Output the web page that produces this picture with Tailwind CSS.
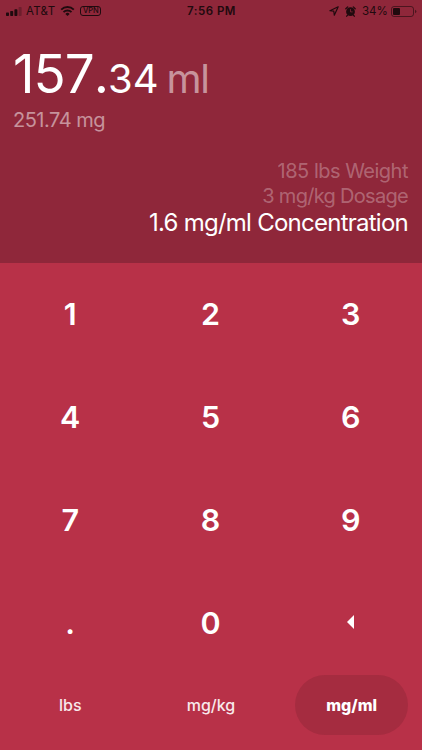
<!DOCTYPE html>
<html lang="en">

<head>
    <meta charset="UTF-8">
    <meta name="viewport" content="width=device-width, initial-scale=1.0">
    <title>Dosage Calculator</title>
    <script src="https://cdn.jsdelivr.net/npm/@tailwindcss/browser@4"></script>
</head>

<body class="h-[750px] flex flex-col overflow-hidden bg-[#b83148] text-white font-['Inter',sans-serif]">
    <!-- results start -->
    <header class="h-[262.5px] shrink-0 bg-[#8f273a]">
        <!-- status bar -->
        <div class="h-[22px] grid grid-cols-3 items-center pl-1.5 pr-[5px] text-[#200a0e] text-[11.5px]">
            <div class="flex items-center">
                <svg class="w-4 h-[9px]" viewBox="0 0 16 9" fill="currentColor">
                    <rect x="0" y="5.5" width="3" height="3.5" rx=".7" />
                    <rect x="4.2" y="4" width="3" height="5" rx=".7" />
                    <rect x="8.4" y="2.2" width="3" height="6.8" rx=".7" />
                    <rect x="12.6" y="0" width="3" height="9" rx=".7" opacity=".3" />
                </svg>
                <span class="ml-1 mt-px tracking-[.3px]">AT&amp;T</span>
                <svg class="ml-[5px] w-[15px] h-[10px]" viewBox="0 0 14 10" fill="none" stroke="currentColor" stroke-width="1.9">
                    <path d="M.7 3.6a9 9 0 0 1 12.6 0" />
                    <path d="M3 6.1a5.7 5.7 0 0 1 8 0" />
                    <path d="M7 10 4.9 7.9a3 3 0 0 1 4.2 0z" fill="currentColor" stroke="none" />
                </svg>
                <span class="ml-[5px] w-[21px] h-[10px] rounded-[3px] border border-current text-center text-[7.5px] leading-[8.5px] font-medium">VPN</span>
            </div>
            <div class="mt-px text-center font-semibold tracking-[.5px]">7:56 PM</div>
            <div class="flex items-center justify-end">
                <svg class="w-[10px] h-[10px]" viewBox="0 0 10 10" fill="none" stroke="currentColor" stroke-width="1.2" stroke-linejoin="round">
                    <path d="M9.2.8.9 4.7l3.9.5.5 4z" />
                </svg>
                <svg class="ml-[6px] w-[11px] h-[11px]" viewBox="0 0 11 11" fill="none" stroke="currentColor" stroke-linecap="round">
                    <circle cx="5.5" cy="5.7" r="4.4" fill="currentColor" stroke="none" />
                    <path d="M.8 2.7 2.7.9M10.2 2.7 8.3.9M2.4 9.3l-.7.9M8.6 9.3l.7.9" stroke-width="1.3" />
                    <path d="M5.5 3.4v2.5h1.8" stroke="#8f273a" stroke-width=".7" />
                </svg>
                <span class="ml-1.5 mt-px tracking-[.1px]">34%</span>
                <svg class="ml-[3px] w-[26px] h-[11px]" viewBox="0 0 26 11">
                    <rect x=".5" y=".5" width="22" height="10" rx="2.5" fill="none" stroke="currentColor" opacity=".6" />
                    <rect x="2" y="2" width="7" height="7" rx="1" fill="currentColor" />
                    <path d="M24 3.7v3.6q1.4-.5 1.4-1.8T24 3.7" fill="currentColor" opacity=".6" />
                </svg>
            </div>
        </div>

        <div class="px-[13px] pt-[22px]">
            <div class="h-[60px] flex items-baseline leading-[60px] whitespace-nowrap">
                <span class="text-[53px] tracking-[-1px] [font-kerning:none]" id="whole">157.</span>
                <span class="text-[40px]" id="decimal">34</span>
                <span class="ml-2 text-[40px] tracking-[-1.5px] text-white/50">ml</span>
            </div>
            <p class="mt-[4px] text-[20px] leading-6 tracking-[-.5px] text-white/50">251.74 mg</p>
        </div>
        <div class="px-[14px] pt-[27px] text-right text-[20px] leading-6 whitespace-nowrap">
            <p class="tracking-[-.5px] text-white/30">185 lbs Weight</p>
            <p class="pt-px tracking-[-.7px] text-white/30">3 mg/kg Dosage</p>
            <p class="text-[24px] leading-[30px] tracking-[-.75px]">1.6 mg/ml Concentration</p>
        </div>
    </header>
    <!-- results end -->

    <!-- keypad start -->
    <main class="grid grid-cols-3 auto-rows-[103px] pr-px text-[30.5px] font-semibold">
        <button>1</button>
        <button>2</button>
        <button>3</button>
        <button>4</button>
        <button>5</button>
        <button>6</button>
        <button>7</button>
        <button>8</button>
        <button>9</button>
        <button>.</button>
        <button>0</button>
        <button class="flex items-center justify-center" aria-label="Delete">
            <svg class="w-[7px] h-[14px] mb-[3px]" viewBox="0 0 7 14" fill="currentColor">
                <path d="M7 0v14L0 7z" />
            </svg>
        </button>
    </main>
    <!-- keypad end -->

    <!-- units start -->
    <nav class="grid grid-cols-3 h-[60px] text-[16px]">
        <button class="mx-[14px] font-medium text-white/90">lbs</button>
        <button class="mx-[14px] font-medium text-white/90">mg/kg</button>
        <button class="mx-[14px] rounded-full bg-[#a52c40] font-extrabold">mg/ml</button>
    </nav>
    <!-- units end -->
</body>

</html>
